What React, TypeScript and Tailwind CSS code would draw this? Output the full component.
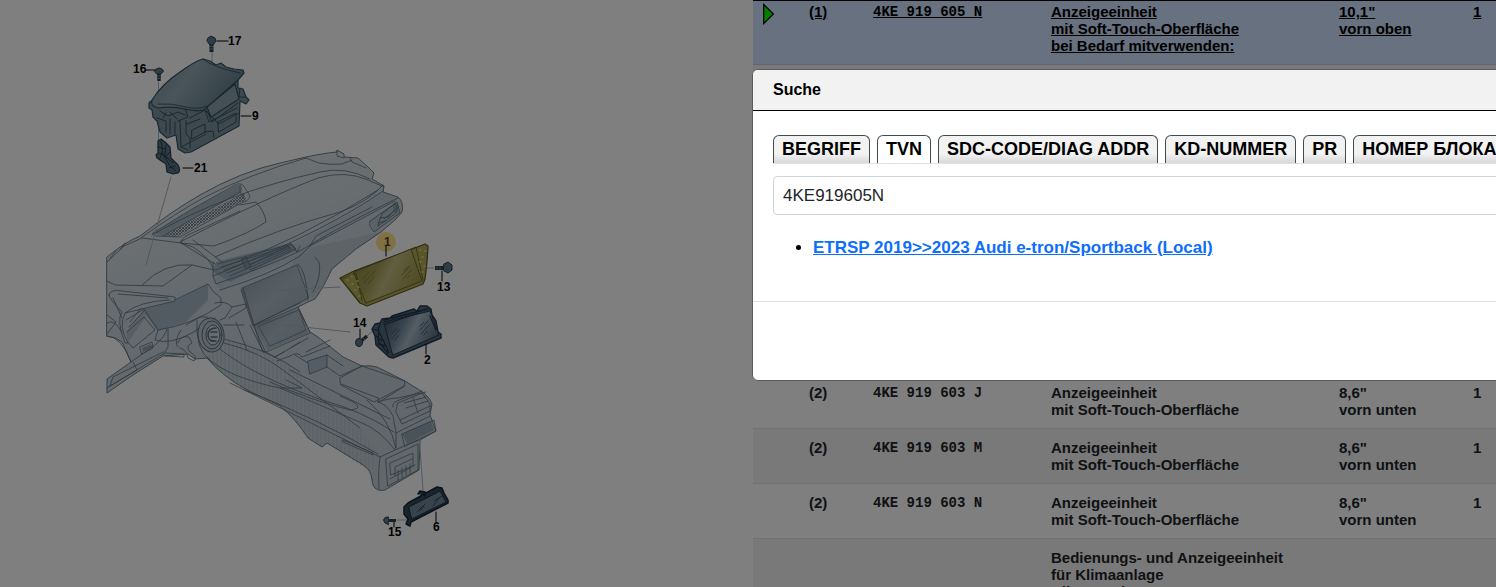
import { useState } from 'react'
import clsx from 'clsx'

type Part = {
  pos: string
  number: string
  name: string[]
  note: string[]
  qty: string
  selected?: boolean
}

const SELECTED: Part = {
  pos: '(1)',
  number: '4KE 919 605 N',
  name: ['Anzeigeeinheit', 'mit Soft-Touch-Oberfläche', 'bei Bedarf mitverwenden:'],
  note: ['10,1"', 'vorn oben'],
  qty: '1',
  selected: true,
}

const PARTS: Part[] = [
  ...['J', 'M', 'N'].map((suffix) => ({
    pos: '(2)',
    number: `4KE 919 603 ${suffix}`,
    name: ['Anzeigeeinheit', 'mit Soft-Touch-Oberfläche'],
    note: ['8,6"', 'vorn unten'],
    qty: '1',
  })),
  {
    pos: '',
    number: '',
    name: ['Bedienungs- und Anzeigeeinheit', 'für Klimaanlage', 'Climatronic'],
    note: [],
    qty: '',
  },
]

const TABS = ['BEGRIFF', 'TVN', 'SDC-CODE/DIAG ADDR', 'KD-NUMMER', 'PR', 'НОМЕР БЛОКА']

export default function App() {
  return (
    <div className="relative grid h-screen grid-cols-[753fr_743fr] overflow-hidden bg-white font-['Liberation_Sans',Arial,sans-serif]">
      <Illustration />
      <main className="relative min-w-0">
        <PartsTable />
        <div className="absolute top-[69px] -left-px z-20 w-[calc(100%+40px)]">
          <SearchDialog />
        </div>
      </main>
      <div className="absolute inset-0 z-10 bg-black/50" />
    </div>
  )
}

function PartsTable() {
  return (
    <table className="w-full table-fixed border-t border-black text-[15px] leading-[17px] font-bold text-[#212529]">
      <colgroup>
        <col className="w-[46px]" />
        <col className="w-16" />
        <col className="w-[178px]" />
        <col className="w-72" />
        <col className="w-[134px]" />
        <col />
      </colgroup>
      <tbody>
        <PartRow part={SELECTED} />
        <tr className="h-[309px] border-b border-[#dee2e6] bg-[#f2f2f2]">
          <td colSpan={6} />
        </tr>
        {PARTS.map((part, i) => (
          <PartRow key={i} part={part} striped={i % 2 === 1} />
        ))}
      </tbody>
    </table>
  )
}

function PartRow({ part, striped }: { part: Part; striped?: boolean }) {
  const cell = clsx('pb-[10px] pl-[10px] align-top', part.selected ? 'pt-[2px]' : 'pt-[10px]')
  return (
    <tr
      className={clsx(
        'border-b',
        part.selected ? 'border-[#bccbe0] bg-[#d0e2ff] text-black underline' : 'border-[#dee2e6]',
        striped && 'bg-[#f2f2f2]',
      )}
    >
      <td className={cell}>
        {part.selected && (
          <svg viewBox="0 0 12 22" className="h-[22px] w-3">
            <path d="M0.7 1.5V20.5L10.4 11Z" fill="#00ff00" stroke="#000" strokeWidth="1.2" />
          </svg>
        )}
      </td>
      <td className={cell}>{part.pos}</td>
      <td className={clsx(cell, "font-['Liberation_Mono',monospace] text-sm leading-[19px] whitespace-nowrap")}>
        {part.number}
      </td>
      <td className={clsx(cell, 'whitespace-nowrap')}>
        {part.name.map((line) => (
          <div key={line}>{line}</div>
        ))}
      </td>
      <td className={clsx(cell, 'whitespace-nowrap')}>
        {part.note.map((line) => (
          <div key={line}>{line}</div>
        ))}
      </td>
      <td className={cell}>{part.qty}</td>
    </tr>
  )
}

function SearchDialog() {
  const [tab, setTab] = useState('TVN')
  const [query, setQuery] = useState('4KE919605N')

  return (
    <div role="dialog" aria-labelledby="search-title" className="overflow-hidden rounded-md border border-[#5c5c5c] bg-white">
      <header className="flex h-[41px] items-center border-b border-black bg-[#f2f2f2] px-5">
        <h2 id="search-title" className="text-base leading-6 font-bold text-black">
          Suche
        </h2>
      </header>
      <div className="px-5 pt-6 pb-10">
        <div role="tablist" className="flex gap-[7px] border-b border-[#dee2e6]">
          {TABS.map((name) => (
            <TabButton key={name} active={tab === name} onClick={() => setTab(name)}>
              {name}
            </TabButton>
          ))}
        </div>
        <input
          type="text"
          aria-label="TVN"
          value={query}
          onChange={(e) => setQuery(e.target.value)}
          className="mt-3 block h-[39px] w-full rounded border border-[#ced4da] bg-white px-[9px] text-[17px] text-[#212529] outline-none"
        />
        <ul className="mt-5 list-disc pl-10 text-[17px] leading-[26px] text-black">
          <li>
            <a href="#etrsp" className="font-bold text-[#0d6efd] underline">
              ETRSP 2019&gt;&gt;2023 Audi e-tron/Sportback (Local)
            </a>
          </li>
        </ul>
      </div>
      <footer className="h-[79px] border-t border-[#dee2e6]" />
    </div>
  )
}

function TabButton({
  active,
  onClick,
  children,
}: {
  active: boolean
  onClick: () => void
  children: React.ReactNode
}) {
  return (
    <button
      role="tab"
      aria-selected={active}
      onClick={onClick}
      className={clsx(
        'h-7 shrink-0 rounded-t-md border border-b-0 border-[#414d4b] px-2 pb-[2px] text-lg leading-6 font-bold whitespace-nowrap text-black',
        active ? 'bg-white' : 'bg-linear-to-b from-[#f2f2f2] from-65% to-[#d9d9d9]',
      )}
    >
      {children}
    </button>
  )
}

const SILHOUETTE =
  'M107 257Q125 242 140 236Q172 211 200 195Q240 172 280 163L306 157Q325 153 337 152L337 150L344 154V157L358 158L368 167L374 173L372 179L384 186L383 192L398 197Q404 202 402 212L396 219L381 232L356 249L332 269Q322 290 315 299L308 302L298 307L310 332L318 337L343 357L362 366Q370 365 377 367L405 381L421 391Q429 396 432 404L430 415L436 431L420 440L419 470L385 490Q376 492 373 485L371 475Q369 468 360 463L327 443L322 447L308 438Q295 418 280 406L247 390Q222 376 207 358L195 359L188 354L163 356L133 375L107 393V379L131 362L122 342Q116 337 107 336Z'

// fine contour lines of the dashboard and centre console
const CONTOURS = [
  // upper dash
  'M107 262L124 246L142 238M110 258L116 251M120 250L125 243',
  'M142 237Q176 213 205 197Q250 174 306 158',
  'M306 158L319 163Q330 165 342 164L352 160M337 151V156L344 158M350 158L352 162L366 168',
  'M152 235Q225 193 320 172Q345 166 370 179',
  'M180 242Q270 196 318 178Q345 170 368 180L384 187',
  'M240 205L256 202Q265 212 266 222Q250 233 214 246L181 243Q181 238 190 234L240 211',
  'M142 238L181 243L193 247Q210 258 214 270',
  'M181 243L215 264M193 240L222 262',
  'M213 262L213 276L235 267Q330 228 383 191M215 257Q280 228 340 212Q368 202 383 185',
  'M216 270Q300 240 378 190M213 276L216 284Q280 262 305 248Q340 226 398 198',
  'M220 290Q270 275 300 256L310 246L395 201',
  'M382 214L396 203V213L378 226ZM384 219L399 207M370 221L397 202L400 213L374 232L370 226Z',
  'M380 218L388 217L394 211M378 223L386 221M394 204V212M397 205V212',
  'M250 265L292 244L296 249L250 270M290 243L297 252L300 246M310 246L316 236L372 207',
  // instrument hood and wheel side
  'M214 270L192 265Q165 262 142 285M192 265L163 286L115 285L107 281',
  'M109 295Q110 289 122 291L175 297V301L125 313Q118 326 128 343L125 343Q116 320 122 312Q110 300 109 295Z',
  'M125 313Q140 301 170 300M113 298L122 318M118 294Q145 296 168 298',
  'M127 332L144 317L155 330L133 348L128 342M129 327L144 311M130 322L141 308M126 320L144 309',
  'M144 309L158 330Q192 325 221 305V298Q212 292 208 284L175 300M158 330L155 340Q170 345 192 333L215 318',
  'M107 323Q114 318 122 332M107 315L116 322L107 334',
  'M107 336Q121 336 131 362L155 345Q165 337 167 329M140 347L152 342L153 348L142 354Z',
  'M110 386L113 377L163 352M133 362L137 370L110 386M107 388L163 354',
  'M168 329V347L163 355M181 330Q173 342 178 347M186 325L200 317L208 317',
  'M178 343Q180 335 189 337L192 343Q185 346 190 352Q198 356 194 361L188 358Q187 350 180 348',
  'M165 353L184 354L184 357L165 356M197 320Q195 350 210 360',
  'M215 303Q225 300 232 307L225 318L220 320M232 307L246 304V308L229 318M224 325H244',
  'M243 288L254 325L300 303M254 325L262 350M250 325L264 353M241 290L253 326M236 322L247 350',
  // console
  'M224 343Q260 352 283 370L360 428M224 339Q270 350 300 372',
  'M215 345Q250 375 322 400Q360 410 394 432M207 358Q230 378 280 388H302L286 380',
  'M280 388L362 423Q380 430 395 450L380 457L230 383M380 457Q378 470 379 489',
  'M367 400Q390 420 396 448M290 370L390 419M270 382Q310 400 350 410Q370 408 340 396',
  'M245 390Q320 420 378 454M343 440L373 453V455L343 442Z',
  'M308 361L327 355V367L310 374ZM327 355L343 366M327 367L340 376L362 366M295 355L308 363',
  'M340 378L362 366L405 381L404 386L378 400L374 402L341 385ZM341 384L378 398M378 398L379 402L405 386',
  'M378 402Q390 398 398 398L426 392M393 407Q392 403 397 401L422 391M398 403L422 393L430 404V411L402 424L396 412Z',
  'M378 402Q387 404 393 416L396 433L430 416M400 420L430 406M404 403L426 397M406 408L428 401M413 398L418 413M402 434L434 420L436 431L405 446Z',
  'M386 459L418 444V470L388 486ZM390 463L413 453V466L391 475ZM395 476V467L412 459M398 470V480M402 468V478M406 466V475M410 464V473M390 479L415 465',
  'M396 433L396 448M395 450L419 440',
  'M262 350L275 357L308 338M275 357L284 352M277 361L290 356Q298 351 302 357L330 346M290 348L300 342M306 352L330 340',
  'M315 257L319 262Q322 275 313 292M298 264Q306 270 308 300',
]

// callout number, text origin, leader line
const CALLOUTS: [string, number, number, string][] = [
  ['17', 228, 45, 'M217 41H228'],
  ['16', 133, 73, 'M146 70H155'],
  ['9', 252, 120, 'M241 116H251'],
  ['21', 194, 172, 'M183 168H193'],
  ['1', 384, 246, 'M386 246V256'],
  ['13', 437, 291, 'M442 271V281'],
  ['14', 353, 327, 'M360 329V338'],
  ['2', 424, 364, 'M426 344V354'],
  ['15', 388, 536, 'M394 522V527'],
  ['6', 433, 531, 'M436 512V522'],
]

function Illustration() {
  return (
    <svg viewBox="0 0 753 587" className="w-full" fill="none" strokeLinejoin="round" strokeLinecap="round">
      <defs>
        <linearGradient id="dash" gradientUnits="userSpaceOnUse" x1="180" y1="190" x2="260" y2="400">
          <stop offset="0" stopColor="#dde3e5" />
          <stop offset="0.45" stopColor="#c9d5dc" />
          <stop offset="1" stopColor="#c3cfd5" />
        </linearGradient>
        <linearGradient id="screen" x1="0" y1="0" x2="1" y2="1">
          <stop offset="0" stopColor="#8c9fac" />
          <stop offset="0.5" stopColor="#afbfca" />
          <stop offset="1" stopColor="#96abb8" />
        </linearGradient>
        <linearGradient id="lid" x1="0" y1="0.3" x2="1" y2="0.7">
          <stop offset="0" stopColor="#7e96a3" />
          <stop offset="0.35" stopColor="#94aab5" />
          <stop offset="1" stopColor="#5d7886" />
        </linearGradient>
        <linearGradient id="gold" x1="0" y1="0" x2="1" y2="0.4">
          <stop offset="0" stopColor="#928b40" />
          <stop offset="0.4" stopColor="#a39c55" />
          <stop offset="0.6" stopColor="#c4bd82" />
          <stop offset="1" stopColor="#a39b4d" />
        </linearGradient>
        <linearGradient id="lower" x1="0" y1="0" x2="1" y2="0.4">
          <stop offset="0" stopColor="#37495a" />
          <stop offset="0.4" stopColor="#71899c" />
          <stop offset="0.6" stopColor="#a9bbc8" />
          <stop offset="1" stopColor="#5c7386" />
        </linearGradient>
        <pattern id="mesh" width="3" height="3" patternUnits="userSpaceOnUse">
          <path d="M0 0L3 3M3 0L0 3" stroke="#64747e" strokeWidth="0.8" />
        </pattern>
        <pattern id="ribs" width="4" height="8" patternUnits="userSpaceOnUse">
          <path d="M1 0V8" stroke="#aebfc9" strokeWidth="0.9" />
        </pattern>
      </defs>

      {/* dashboard body */}
      <path d={SILHOUETTE} fill="url(#dash)" />
      <path d="M224 338Q270 350 300 374L360 428L378 454L245 390Q222 376 207 358Z" fill="url(#ribs)" />
      <path d="M280 407L378 457L371 472L327 443L322 447L308 438Q295 418 280 407Z" fill="url(#ribs)" />
      <path d="M142 310L175 301L208 284L208 300L186 322L158 331Z" fill="#a4b7c2" />
      <path d="M213 276Q300 248 383 192L398 198L310 246L300 256L220 290Z" fill="#bfced7" />
      <path d="M300 250L316 246L381 232L356 249L332 269L315 299L300 290L290 268Z" fill="#b9c8d1" />
      <path d="M213 272L216 262L290 243L297 250L230 282Z" fill="#9fb2be" />
      <path d="M153 233Q195 206 237 185L242 186V192L163 236Z" fill="#a5b6c1" />
      <path d="M163 236L244 193L246 200L176 237Z" fill="url(#mesh)" />
      <path
        d="M153 233Q195 206 237 184Q243 183 245 188L250 196Q248 202 243 202L180 237L157 236ZM240 185V192L245 200M163 236L240 192"
        stroke="#6d828f"
        strokeWidth="0.9"
      />
      <path d="M242 288L297 265L309 298L254 325Z" fill="url(#screen)" />
      <path d="M254 326L298 307L308 333L267 350Z" fill="url(#screen)" />
      <path
        d="M242 288L297 265L309 298L254 325ZM254 326L298 307L310 333L266 352ZM259 326L299 310L306 330L270 346Z"
        stroke="#6c808c"
        strokeWidth="0.9"
      />
      <path d="M308 361L327 355V367L310 374Z" fill="#a9bbc6" />
      <path d="M402 434L431 421L434 430L407 444Z" fill="#93a7b5" />
      <path d="M370 221L397 202L400 213L374 232Z" fill="#b3c4cf" />
      <path d="M126 332L144 309L146 317L128 342Z" fill="#aebfc9" />
      <path d="M142 348L151 344L152 347L143 352Z" fill="#8b9eaa" />
      {[0, 3, 6, 9, 12].map((dy) => (
        <path key={dy} d={`M${218 + dy} ${264 + dy}L${288 + dy / 3} ${245 + dy / 3}`} stroke="#5f7482" strokeWidth="0.8" />
      ))}
      <path d="M242 259L246 257L251 267L246 269Z" fill="#8499a6" stroke="#5f7482" strokeWidth="0.8" />
      <g stroke="#5a707e" strokeWidth="0.9">
        <path d={SILHOUETTE} />
        {CONTOURS.map((d) => (
          <path key={d} d={d} strokeWidth="0.8" />
        ))}
      </g>
      <g stroke="#596f7c" strokeWidth="1" fill="#b9c7cf">
        <ellipse cx="211" cy="335" rx="13" ry="17" transform="rotate(-8 211 335)" />
        <ellipse cx="212" cy="335" rx="10" ry="14" />
        <ellipse cx="213" cy="335" rx="7" ry="10" fill="#cdd8de" />
        <path d="M216 328Q208 328 208 335Q208 342 216 341M211 332H217M211 337H217" fill="none" strokeWidth="1.6" />
      </g>

      {/* exploded-view guide lines */}
      <path
        d="M158.5 82V142M171 177L146 265M212 52V62M279 290L340 287M284 325L350 332M419 435L423 490M397 520L406 520M425 268H434M367 336L374 330"
        stroke="#a3b5c0"
        strokeWidth="1"
      />

      {/* 9: instrument housing */}
      <g stroke="#33505f" strokeWidth="1.2">
        <path
          d="M151 101L149 103V108L152 110L153 117L157 121L160 132L167 138L176 135L178 149L185 153L191 152L239 126L240 101L246 104L249 100L246 97L243 89L238 88V80L204 108Z"
          fill="#7a919f"
        />
        <path
          d="M152 100Q162 84 180 72Q195 61 203 59L210 61L216 65L221 63L226 67L234 69L243 70L244 73L238 80L204 110Q196 112 185 109Q172 106 158 108Q150 106 152 100Z"
          fill="url(#lid)"
        />
        <path d="M207 107L235 84L239 99L211 117Z" fill="#8ba1ad" />
        <path
          d="M207 111L212 122L238 103M190 118L205 110L209 122L237 108M185 109L188 117L178 121M187 124L200 119M192 130L205 124V132L192 139ZM218 122L236 113V122L219 132ZM160 111L168 116L178 112L185 115M157 118L166 121V132M170 119V134M175 122V134M180 121L181 147L188 150M186 121V134L190 138V148M205 132L213 131L214 137M166 113L163 118M170 112L177 119M240 88L239 97L246 97"
          strokeWidth="1"
        />
        <path
          d="M205 110L219 124L239 113M181 147L206 134M158 104Q172 103 186 107Q198 110 207 106M203 59Q212 67 240 73"
          strokeWidth="0.9"
        />
      </g>

      {/* 21: bracket */}
      <g stroke="#263d4a" strokeWidth="1.2">
        <path
          d="M158 141L161 139L165 142L170 147L171 158L178 165Q181 170 178 173L173 174L167 172L166 164L157 158L156 155L158 153Z"
          fill="#5d7787"
        />
        <path
          d="M161 141L163 154L170 166L176 171M166 145L165 156L173 163M158 147L165 149M159 153L168 158M169 168L175 166M160 158L162 152M170 152L164 158"
          strokeWidth="1"
        />
      </g>

      {/* 1: upper display */}
      <g stroke="#5f5b1e" strokeWidth="1.3">
        <path d="M340 278L354 271L402 253L425 244L428 246L427 262L425 279L423 284L367 306L360 303Z" fill="#b5ac59" />
        <path d="M354 272L411 249L422 281L366 303Z" fill="url(#gold)" strokeWidth="0.9" />
        <path d="M342 279L356 273L362 301M411 249L416 247L423 280" strokeWidth="0.8" />
        <path
          d="M363 279L369 272M364 283L375 271M368 284L374 277M402 275L410 266M403 279L411 270M404 271L408 267M407 278L410 275"
          stroke="#7a7434"
          strokeWidth="0.8"
        />
        <path
          d="M347 280H348M351 276H352M352 284H353M355 290H356M357 281H358M359 296H360M358 287H359M420 250H421M422 257H423M420 262H421M424 266H425M422 272H423M425 251H426"
          stroke="#e5dc88"
          strokeWidth="1.6"
        />
      </g>

      {/* 2: lower display */}
      <g stroke="#22364a" strokeWidth="1.4">
        <path
          d="M372 329L375 324L380 323L382 319L390 318L392 316L414 309L417 311L420 306L427 306L431 309L432 315L436 321L438 332L441 334V338L393 358L389 357L376 345L375 336Z"
          fill="#536b7d"
        />
        <path d="M384 322L430 311L439 335L393 355Z" fill="url(#lower)" strokeWidth="1" />
        <path
          d="M373 329L379 331L378 341L388 353M380 324L378 330L389 352M384 320L428 309M386 324L418 313M376 336L382 341M378 344L386 346M430 316L436 330"
          strokeWidth="1.3"
        />
        <path
          d="M391 335L397 328M392 339L399 330M395 340L399 335M420 330L428 321M421 334L429 325M420 326L424 322M424 335L427 331"
          stroke="#3d566a"
          strokeWidth="0.9"
        />
      </g>

      {/* 6: rear display */}
      <g stroke="#152633" strokeWidth="1.5">
        <path
          d="M418 494L420 491L425 492V496M404 507L408 503L437 487L442 488L444 493L448 500V503L411 522L410 526L406 524L408 519L404 514Z"
          fill="#34495a"
        />
        <path d="M409 507L440 491L446 502L412 519Z" fill="#6f8999" strokeWidth="0.9" />
        <path d="M417 512L425 504M420 511L424 506M433 506L440 497M434 501L442 496" stroke="#263b49" strokeWidth="0.8" />
      </g>

      {/* screws */}
      <g stroke="#2b414f" fill="#5f7a8a">
        <path d="M211.5 44V52" strokeWidth="4" strokeLinecap="butt" />
        <path d="M208 38L211 36L215 38L216 41L213 45H210L207 41Z" />
        <path d="M159 73V81" strokeWidth="3.5" strokeLinecap="butt" />
        <path d="M154.5 71Q156 68 159 68Q162 68 163.5 71L161 74H157Z" />
        <path d="M435 268H444" strokeWidth="4" strokeLinecap="butt" />
        <path d="M444 264L448 262L452 265V270L448 273L444 271Z" />
        <path d="M360 342L367 336" strokeWidth="3.5" strokeLinecap="butt" />
        <ellipse cx="359" cy="342.5" rx="3.5" ry="4" />
        <path d="M389 520.5H396" strokeWidth="3" strokeLinecap="butt" />
        <path d="M388 517L385 517.5L383.5 520L385 523L388 524.5Z" />
        {/* thread marks */}
        <path
          d="M210 46.5H213M210 49H213M158 76H160M158 78.5H160M437 267V269M440 267V269M363 338L365 340"
          stroke="#8ba2b0"
          strokeWidth="0.8"
        />
      </g>

      {/* callouts */}
      <circle cx="386" cy="242" r="10" fill="#ffe08a" />
      {CALLOUTS.map(([label, x, y, leader]) => (
        <g key={label}>
          <path d={leader} stroke="#000" strokeWidth="1" />
          <text x={x} y={y} fill={label === '1' ? '#4d3c10' : '#000'} className="text-xs font-bold">
            {label}
          </text>
        </g>
      ))}
    </svg>
  )
}
